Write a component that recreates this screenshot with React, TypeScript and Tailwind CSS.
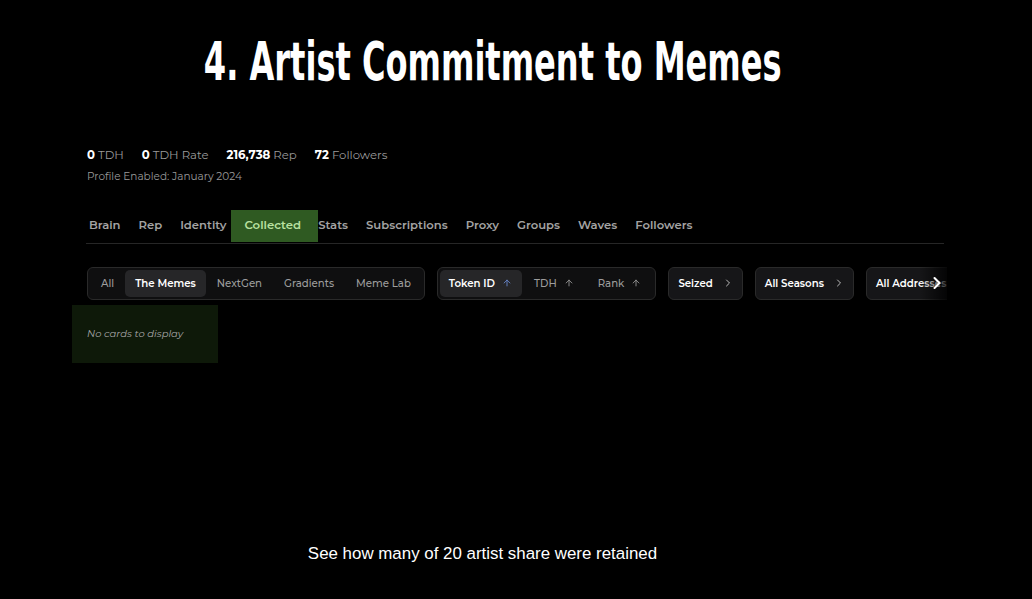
import { ChevronRight, ArrowUp } from "lucide-react";

const stats = [
  { value: "0", label: "TDH" },
  { value: "0", label: "TDH Rate" },
  { value: "216,738", label: "Rep" },
  { value: "72", label: "Followers" },
];

const tabs = ["Brain", "Rep", "Identity", "Collected", "Stats", "Subscriptions", "Proxy", "Groups", "Waves", "Followers"];

const collections = ["All", "The Memes", "NextGen", "Gradients", "Meme Lab"];

const sorts = ["Token ID", "TDH", "Rank"];

const App = () => {
  return (
    <div className="w-[1032px] h-[599px] bg-black text-white overflow-hidden flex flex-col font-['Montserrat','Inter',sans-serif]">
      <div className="flex justify-center pt-[32px] h-[118px] pr-[46px]">
        <h1 className="font-['DejaVu_Sans_Condensed','DejaVu_Sans',sans-serif] font-bold text-[54px] leading-[60px] scale-x-[0.66] whitespace-nowrap">
          4. Artist Commitment to Memes
        </h1>
      </div>

      <div className="pl-[87px] pr-[87px]">
        <div className="flex items-center gap-[18px] text-[11.7px] h-[20px] mt-[28px]">
          {stats.map((s) => (
            <div key={s.label} className="flex gap-[3px] whitespace-nowrap">
              <span className="font-bold text-white">{s.value}</span>
              <span className="text-[#9a9a9a]">{s.label}</span>
            </div>
          ))}
        </div>
        <div className="text-[10.5px] text-[#9a9a9a] mt-[3px]">Profile Enabled: January 2024</div>

        <div className="flex items-stretch mt-[25px] border-b border-[#262626] w-[858px] -ml-[1px] h-[34px]">
          {tabs.map((t) => (
            <div
              key={t}
              className={
                t === "Collected"
                  ? "h-[32px] flex items-center pl-[13px] pr-[17px] -ml-[4px] -mr-[9px] bg-[#2f5a22] text-[#b8e0a0] font-semibold text-[11.7px] whitespace-nowrap"
                  : "h-[32px] flex items-center px-[9px] text-[#a3a3a3] font-semibold text-[11.6px] whitespace-nowrap first:pl-[3px]"
              }
            >
              {t}
            </div>
          ))}
        </div>

        <div className="flex items-center gap-[12px] mt-[23px] w-[860px] overflow-hidden relative">
          <div className="flex items-center h-[33px] px-[2px] rounded-[6px] border border-[#2a2a2a] bg-[#0f0f10] shrink-0">
            {collections.map((c) => (
              <div
                key={c}
                className={
                  c === "The Memes"
                    ? "h-[27px] flex items-center px-[10px] rounded-[5px] bg-[#262628] text-white font-semibold text-[10.2px] whitespace-nowrap"
                    : "h-[27px] flex items-center px-[11px] text-[#9d9d9d] font-medium text-[10.2px] whitespace-nowrap"
                }
              >
                {c}
              </div>
            ))}
          </div>

          <div className="flex items-center h-[33px] px-[2px] rounded-[6px] border border-[#2a2a2a] bg-[#0f0f10] shrink-0">
            {sorts.map((s, i) => (
              <div
                key={s}
                className={
                  i === 0
                    ? "h-[27px] flex items-center gap-[7px] pl-[9px] pr-[10px] rounded-[5px] bg-[#262628] text-white font-semibold text-[10.2px] whitespace-nowrap"
                    : "h-[27px] flex items-center gap-[7px] px-[12px] text-[#9d9d9d] font-medium text-[10.2px] whitespace-nowrap"
                }
              >
                {s}
                <ArrowUp size={10} strokeWidth={2} className={i === 0 ? "text-[#6b8bd6]" : "text-[#9d9d9d]"} />
              </div>
            ))}
          </div>

          <div className="shrink-0 flex items-center gap-[9px] h-[33px] pl-[9px] pr-[8px] rounded-[6px] border border-[#2a2a2a] bg-[#161618] text-white font-semibold text-[10.2px] whitespace-nowrap">
            Seized
            <ChevronRight size={12} className="text-[#bbbbbb]" />
          </div>
          <div className="shrink-0 flex items-center gap-[9px] h-[33px] pl-[9px] pr-[8px] rounded-[6px] border border-[#2a2a2a] bg-[#161618] text-white font-semibold text-[10.2px] whitespace-nowrap">
            All Seasons
            <ChevronRight size={12} className="text-[#bbbbbb]" />
          </div>
          <div className="shrink-0 flex items-center gap-[9px] h-[33px] pl-[9px] pr-[8px] rounded-[6px] border border-[#2a2a2a] bg-[#161618] text-white font-semibold text-[10.2px] whitespace-nowrap">
            All Addresses
            <ChevronRight size={12} className="text-[#bbbbbb]" />
          </div>
          <div className="absolute right-0 top-0 h-[33px] w-[28px] bg-gradient-to-r from-transparent to-black/80 flex items-center justify-end">
            <ChevronRight size={20} strokeWidth={2.5} className="text-white" />
          </div>
        </div>
      </div>

      <div className="ml-[72px] mt-[5px] w-[146px] h-[58px] bg-[#0e1909] flex items-center pl-[15px]">
        <span className="italic text-[10px] text-[#a8a8a8]">No cards to display</span>
      </div>

      <div className="flex justify-center mt-[178px] pr-[67px]">
        <p className="font-['Liberation_Sans',Arial,sans-serif] text-[16.9px] text-white">
          See how many of 20 artist share were retained
        </p>
      </div>
    </div>
  );
};

export default App;
